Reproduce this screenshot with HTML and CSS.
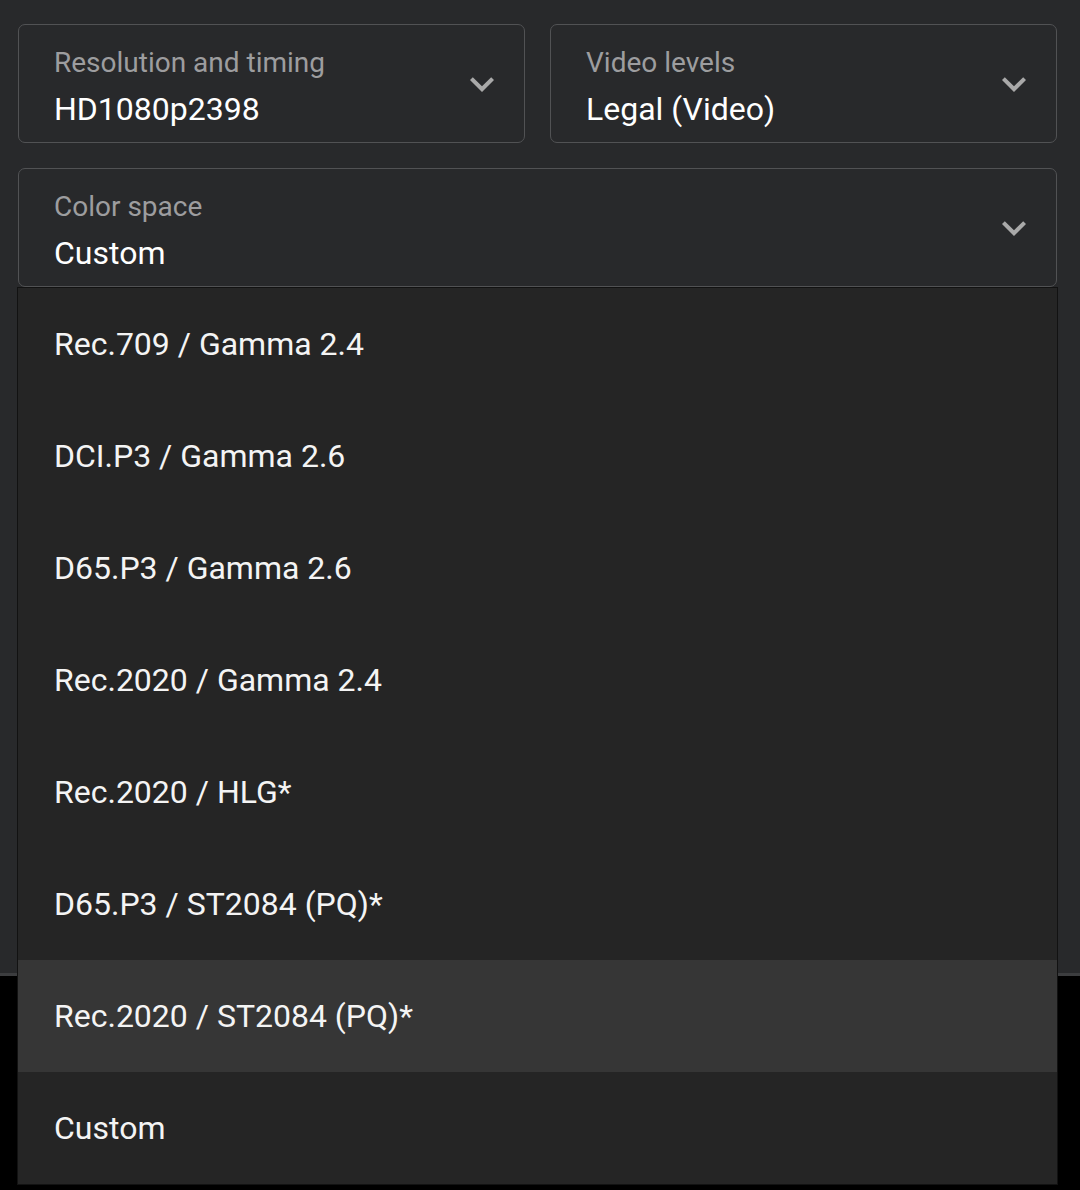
FILE: index.html
```html
<!DOCTYPE html>
<html lang="en">
<head>
<meta charset="utf-8">
<title>Output settings</title>
<link rel="stylesheet" href="styles.css">
</head>
<body>
<div class="page">
  <div class="form">
    <div class="row">
      <div class="field">
        <div class="field-text">
          <div class="label">Resolution and timing</div>
          <div class="value">HD1080p2398</div>
        </div>
        <svg class="chev" viewBox="0 0 24 24" width="48" height="48"><path d="M16.59 8.59L12 13.17 7.41 8.59 6 10l6 6 6-6z"/></svg>
      </div>
      <div class="field">
        <div class="field-text">
          <div class="label">Video levels</div>
          <div class="value">Legal (Video)</div>
        </div>
        <svg class="chev" viewBox="0 0 24 24" width="48" height="48"><path d="M16.59 8.59L12 13.17 7.41 8.59 6 10l6 6 6-6z"/></svg>
      </div>
    </div>
    <div class="field open">
      <div class="field-text">
        <div class="label">Color space</div>
        <div class="value">Custom</div>
      </div>
      <svg class="chev" viewBox="0 0 24 24" width="48" height="48"><path d="M16.59 8.59L12 13.17 7.41 8.59 6 10l6 6 6-6z"/></svg>
      <ul class="menu">
        <li class="item">Rec.709 / Gamma 2.4</li>
        <li class="item">DCI.P3 / Gamma 2.6</li>
        <li class="item">D65.P3 / Gamma 2.6</li>
        <li class="item">Rec.2020 / Gamma 2.4</li>
        <li class="item">Rec.2020 / HLG*</li>
        <li class="item">D65.P3 / ST2084 (PQ)*</li>
        <li class="item hover">Rec.2020 / ST2084 (PQ)*</li>
        <li class="item">Custom</li>
      </ul>
    </div>
  </div>
</div>
</body>
</html>
```

FILE: styles.css
```css
html, body {
  margin: 0;
  padding: 0;
  background: #000;
  font-family: Roboto, "Liberation Sans", Arial, sans-serif;
}

body {
  min-height: 1190px;
}

.page {
  height: 976px;
  background: #28292b;
  border-bottom: 3px solid #3c3d3f;
  padding-top: 24px;
  box-sizing: border-box;
}

.form {
  margin-left: 18px;
  width: 1039px;
  display: flex;
  flex-direction: column;
  gap: 25px;
}

.row {
  display: grid;
  grid-template-columns: 1fr 1fr;
  gap: 25px;
}

.field {
  position: relative;
  height: 119px;
  box-sizing: border-box;
  border: 1px solid #515254;
  border-radius: 7px;
  display: flex;
  align-items: center;
  padding-left: 35px;
  padding-right: 18px;
}

.field-text {
  flex: 1;
  align-self: flex-start;
  padding-top: 20px;
}

.label {
  font-size: 28px;
  line-height: 36px;
  color: #9d9d9f;
}

.value {
  margin-top: 8px;
  font-size: 32px;
  line-height: 40px;
  color: #ffffff;
}

.chev {
  flex: none;
  fill: #a9a9a9;
}

.menu {
  position: absolute;
  top: calc(100% + 1px);
  left: -2px;
  width: calc(100% + 4px);
  margin: 0;
  padding: 0;
  list-style: none;
  background: #252525;
  border: 1px solid #121212;
  box-sizing: border-box;
  z-index: 10;
}

.item {
  height: 112px;
  display: flex;
  align-items: center;
  padding-left: 36px;
  font-size: 32px;
  color: #f4f4f4;
}

.item.hover {
  background: #363636;
}
```
